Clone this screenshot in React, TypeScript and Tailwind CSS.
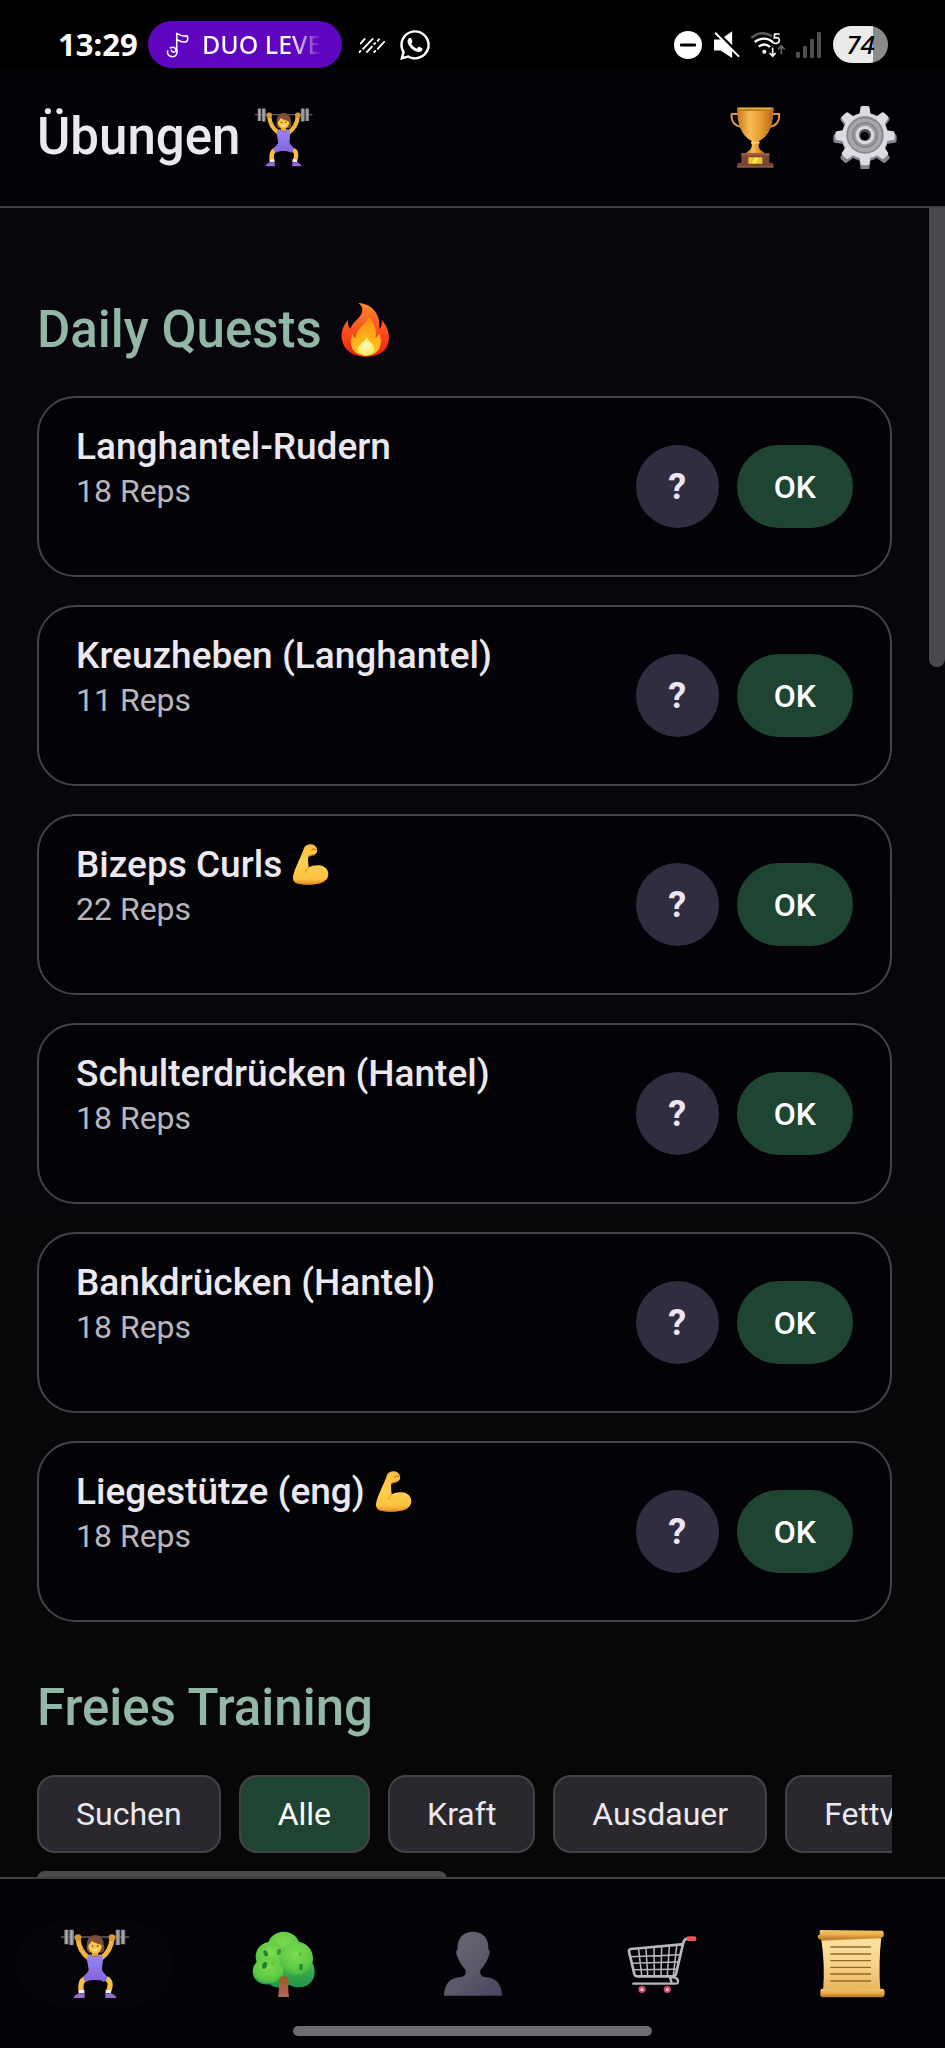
import { useState } from 'react';
import type { ReactNode } from 'react';
import { FaWhatsapp } from 'react-icons/fa';

type IconProps = { className?: string };

function LifterIcon({ className }: IconProps) {
  return (
    <svg viewBox="60 52 210 216" className={className} aria-hidden="true">
      <defs>
        <linearGradient id="plate" x1="0" x2="1" y1="0" y2="0">
          <stop offset="0" stopColor="#77777b" />
          <stop offset="0.5" stopColor="#b0b0b4" />
          <stop offset="1" stopColor="#5c5c60" />
        </linearGradient>
        <linearGradient id="suit" x1="0" x2="0" y1="0" y2="1">
          <stop offset="0" stopColor="#9a86f2" />
          <stop offset="1" stopColor="#8064de" />
        </linearGradient>
      </defs>
      <path d="M63 79H268" stroke="#8c8c90" strokeWidth="3" />
      <rect x="73" y="57" width="13" height="44" rx="2" fill="url(#plate)" />
      <rect x="88" y="57" width="14" height="46" rx="2" fill="url(#plate)" />
      <rect x="227" y="57" width="14" height="46" rx="2" fill="url(#plate)" />
      <rect x="243" y="57" width="13" height="44" rx="2" fill="url(#plate)" />
      <path d="M114 84C116 108 126 128 147 143M216 84C214 108 204 128 183 143" fill="none" stroke="#f3b53c" strokeWidth="15" strokeLinecap="round" />
      <circle cx="114" cy="81" r="10" fill="#d99a2b" />
      <circle cx="216" cy="81" r="10" fill="#d99a2b" />
      <path d="M141 100c0-36 50-36 50 0 4 12 2 24-5 26h-39c-8-4-8-16-6-26z" fill="#7e4c33" />
      <path d="M155 120h20v18h-20z" fill="#e3a12f" />
      <ellipse cx="165" cy="108" rx="20" ry="20" fill="#fbc645" />
      <path d="M145 104c4-3 8-9 10-14 7 7 20 9 31 14-1-15-8-24-20-24s-20 9-21 24z" fill="#80503a" />
      <circle cx="158" cy="106" r="2.5" fill="#4c2b20" />
      <circle cx="173" cy="106" r="2.5" fill="#4c2b20" />
      <path d="M158 116q8 6 15 0" fill="none" stroke="#fff" strokeWidth="3" />
      <path d="M135 204c-12 6-15 17-11 40M199 204c13 6 15 17 6 40" fill="none" stroke="#f8bd43" strokeWidth="16" />
      <path d="M142 137l9-7c5 12 23 12 28 0l9 7c2 14-2 32-2 42 4 8 12 14 16 20-2 7-6 11-11 15-9-8-43-8-52 0-5-4-9-8-10-15 6-7 14-12 17-20 0-12-7-28-4-42z" fill="url(#suit)" />
      <path d="M116 238h17v10h-17zM197 238h16v10h-16z" fill="#f4effa" />
      <path d="M101 262c0-9 11-10 16-16 7 5 11 3 17 1v15zM229 262c0-9-11-10-16-16-7 5-11 3-17 1v15z" fill="#956bd0" />
    </svg>
  );
}

function TrophyIcon({ className }: IconProps) {
  return (
    <svg viewBox="64 46 192 192" className={className} aria-hidden="true">
      <defs>
        <linearGradient id="cup" x1="0" x2="1" y1="0" y2="0">
          <stop offset="0" stopColor="#c77b1d" />
          <stop offset="0.35" stopColor="#f8bd55" />
          <stop offset="0.65" stopColor="#e79a31" />
          <stop offset="1" stopColor="#b4681a" />
        </linearGradient>
      </defs>
      <path d="M110 73H90c-3 22 9 36 29 38M212 73h20c3 22-9 36-29 38" fill="none" stroke="#dc9547" strokeWidth="6" />
      <path d="M107 56h108c1 45-11 83-43 98h-22c-32-15-44-53-43-98z" fill="url(#cup)" />
      <rect x="106" y="53" width="110" height="11" rx="4" fill="#b97c18" />
      <path d="M112 57h96" stroke="#f0bd4f" strokeWidth="3" />
      <path d="M150 153h22v8c-3 13 2 21 15 27v6h-53v-6c14-6 18-15 16-27z" fill="url(#cup)" />
      <path d="M148 159h26" stroke="#ffd47b" strokeWidth="5" />
      <path d="M119 191h84v31h-84z" fill="#81472f" />
      <path d="M119 191h84v6h-84z" fill="#9c6046" />
      <path d="M106 233v-8c0-4 4-6 8-6h94c5 0 8 2 8 6v8z" fill="#764334" />
      <path d="M107 232h108" stroke="#a66b56" strokeWidth="3" />
      <rect x="140" y="203" width="42" height="19" rx="2" fill="#ebc52b" />
      <path d="M151 221l8-17h12l-8 17z" fill="#ffe956" />
    </svg>
  );
}

const teeth = [0, 45, 90, 135, 180, 225, 270, 315];

function GearIcon({ className }: IconProps) {
  return (
    <svg viewBox="398 48 192 192" className={className} aria-hidden="true">
      <defs>
        <linearGradient id="gearFace" x1="0" x2="0" y1="0" y2="1">
          <stop offset="0" stopColor="#d9d9de" />
          <stop offset="1" stopColor="#dedde5" />
        </linearGradient>
      </defs>
      <g fill="#85858f">
        <circle cx="494" cy="148" r="69" />
        {teeth.map((a) => (
          <path key={a} d="M477 84l4-26q1-5 6-5h14q5 0 6 5l4 26z" transform={`rotate(${a} 494 148)`} />
        ))}
      </g>
      <g fill="url(#gearFace)">
        <circle cx="494" cy="140" r="69" />
        {teeth.map((a) => (
          <path key={a} d="M477 78l4-23q1-4 6-4h14q5 0 6 4l4 23z" transform={`rotate(${a} 494 140)`} />
        ))}
      </g>
      <circle cx="494" cy="138" r="56" fill="#85868b" />
      <circle cx="494" cy="139" r="51" fill="#a6a7ad" />
      <circle cx="494" cy="138" r="39" fill="#85868b" />
      <circle cx="494" cy="138" r="34" fill="#9b9ba1" />
      <circle cx="494" cy="138" r="28" fill="#d8d8de" />
      <circle cx="494" cy="138" r="18" fill="#4d4d52" />
      <circle cx="493" cy="141" r="13" fill="#050409" />
    </svg>
  );
}

function FireIcon({ className }: IconProps) {
  return (
    <svg viewBox="1008 66 150 168" className={className} aria-hidden="true">
      <defs>
        <linearGradient id="flame" x1="0" x2="0" y1="0" y2="1">
          <stop offset="0" stopColor="#ff8a2c" />
          <stop offset="0.45" stopColor="#fb5520" />
          <stop offset="1" stopColor="#f2200c" />
        </linearGradient>
        <linearGradient id="flameCore" x1="0" x2="0" y1="0" y2="1">
          <stop offset="0" stopColor="#fd8d14" />
          <stop offset="0.5" stopColor="#ffae18" />
          <stop offset="1" stopColor="#ffc42a" />
        </linearGradient>
        <radialGradient id="flameHeart">
          <stop offset="0" stopColor="#fffbc4" />
          <stop offset="1" stopColor="#ffe95c" />
        </radialGradient>
      </defs>
      <path d="M1063 69c42 2 68 36 63 78 7-5 8-14 7-27 20 22 25 46 20 68-7 27-32 42-68 42-37 0-65-18-71-50-4-22 3-43 18-59-1 12 1 21 7 25 5-12 10-18 22-29 17-17 20-35 2-48z" fill="url(#flame)" />
      <path d="M1094 110c-4 24-36 30-39 64-6-2-9-7-9-13-16 36 4 66 40 66 38 0 54-33 39-67-2 7-6 12-11 14 6-24-4-46-20-64z" fill="url(#flameCore)" />
      <path d="M1088 170c3 14 23 19 23 38 0 12-11 19-25 19s-25-7-25-19c0-17 22-21 27-38z" fill="url(#flameHeart)" />
    </svg>
  );
}

function BicepsIcon({ className }: IconProps) {
  return (
    <svg viewBox="66 12 114 129" className={className} aria-hidden="true">
      <defs>
        <linearGradient id="arm" x1="0" x2="0" y1="0" y2="1">
          <stop offset="0" stopColor="#fbbf42" />
          <stop offset="0.5" stopColor="#ffce50" />
          <stop offset="0.85" stopColor="#fdc23f" />
          <stop offset="1" stopColor="#e79127" />
        </linearGradient>
      </defs>
      <path d="M102 27c4-7 11-11 19-11 10 0 18 6 20 14 2 8-1 14-9 17-7 2-12 1-16 5-4 7-1 19 0 33 9-4 19-7 30-6 18 1 29 12 29 27 0 22-26 31-56 31-32 0-50-3-50-21 1-22 22-56 33-89z" fill="url(#arm)" />
      <path d="M116 85c-5 4-8 9-9 15" fill="none" stroke="#dc9026" strokeWidth="3" strokeLinecap="round" />
      <path d="M126 35c-1-5 5-6 12-3M116 52c5-4 10-3 16-5" fill="none" stroke="#cf8424" strokeWidth="4" strokeLinecap="round" />
      <path d="M77 130c17 6 62 6 83-2" fill="none" stroke="#df8a24" strokeWidth="4" strokeLinecap="round" opacity="0.7" />
    </svg>
  );
}

function TreeIcon({ className }: IconProps) {
  return (
    <svg viewBox="630 52 210 216" className={className} aria-hidden="true">
      <defs>
        <radialGradient id="leafA" cx="0.5" cy="0.35" r="0.65">
          <stop offset="0" stopColor="#7bdb50" />
          <stop offset="0.7" stopColor="#5fcb45" />
          <stop offset="1" stopColor="#45b443" />
        </radialGradient>
        <linearGradient id="leafB" x1="0" x2="0" y1="0" y2="1">
          <stop offset="0" stopColor="#4fbe44" />
          <stop offset="1" stopColor="#1f934f" />
        </linearGradient>
        <linearGradient id="trunk" x1="0" x2="0" y1="0" y2="1">
          <stop offset="0" stopColor="#9d5a22" />
          <stop offset="1" stopColor="#b2665b" />
        </linearGradient>
      </defs>
      <path d="M641 183c0-24 22-45 50-45h110c16 6 27 28 26 48-1 26-21 44-47 44-12 0-22-3-30-8-18 12-43 12-58-1-29 4-51-14-51-38z" fill="url(#leafB)" />
      <circle cx="734" cy="113" r="50" fill="url(#leafA)" />
      <circle cx="694" cy="138" r="44" fill="url(#leafA)" />
      <ellipse cx="688" cy="180" rx="46" ry="38" fill="url(#leafA)" />
      <circle cx="772" cy="143" r="50" fill="url(#leafA)" />
      <ellipse cx="680" cy="128" rx="6" ry="10" fill="#238330" transform="rotate(-25 680 128)" />
      <ellipse cx="720" cy="124" rx="6" ry="9" fill="#349832" transform="rotate(15 720 124)" />
      <ellipse cx="677" cy="164" rx="7" ry="11" fill="#217d31" transform="rotate(20 677 164)" />
      <ellipse cx="786" cy="169" rx="6" ry="10" fill="#279036" />
      <ellipse cx="784" cy="131" rx="5" ry="6" fill="#67b927" />
      <ellipse cx="701" cy="158" rx="5" ry="6" fill="#76ba25" />
      <ellipse cx="683" cy="199" rx="8" ry="5" fill="#70c631" />
      <circle cx="720" cy="92" r="4" fill="#99cf38" />
      <path d="M720 203c8-8 21-8 28 0 0 22-1 38 2 56h-33c4-17 3-36 3-56z" fill="url(#trunk)" />
    </svg>
  );
}

function ProfileIcon({ className }: IconProps) {
  return (
    <svg viewBox="56 52 210 216" className={className} aria-hidden="true">
      <defs>
        <linearGradient id="bust" x1="0" x2="1" y1="0" y2="1">
          <stop offset="0" stopColor="#6d6b79" />
          <stop offset="0.5" stopColor="#5c5a6a" />
          <stop offset="1" stopColor="#4a4360" />
        </linearGradient>
      </defs>
      <path d="M161 63c34 0 48 25 46 53 6 2 5 18-1 26-6 17-16 28-23 36-1 15 2 20 18 22 32 3 46 22 47 55H74c1-33 15-52 47-55 15-2 19-7 18-22-8-8-17-19-23-36-6-8-7-24-1-26-2-28 12-53 46-53z" fill="url(#bust)" />
    </svg>
  );
}

function CartIcon({ className }: IconProps) {
  return (
    <svg viewBox="624 52 210 216" className={className} aria-hidden="true">
      <g fill="none" stroke="#b9b8be" strokeLinecap="round" strokeLinejoin="round">
        <path d="M805 84q-9 1-12 12l-22 93q-2 8-10 8h-106q-7 0-9-7l-16-67q-1-7 6-8l152-14" strokeWidth="8" />
        <path d="M643 219h126q9 0 8-8 0-7-10-11h-14l5 17" strokeWidth="7" />
        <path d="M635 138l149-6M640 158l138-4M645 177l128-1M659 116l9 78M681 114l5 80M705 112l1 82M728 111l-2 83M751 109l-6 85M773 107l-10 87" strokeWidth="4.5" />
      </g>
      <rect x="803" y="77" width="29" height="14" rx="5" fill="#ed4f57" />
      <circle cx="669" cy="236" r="11" fill="#cc4567" />
      <circle cx="745" cy="236" r="11" fill="#cc4567" />
      <circle cx="669" cy="237" r="5" fill="#f5bccc" />
      <circle cx="745" cy="237" r="5" fill="#f5bccc" />
    </svg>
  );
}

function ScrollIcon({ className }: IconProps) {
  return (
    <svg viewBox="51 52 210 216" className={className} aria-hidden="true">
      <defs>
        <linearGradient id="paper" x1="0" x2="0" y1="0" y2="1">
          <stop offset="0" stopColor="#fbe3a2" />
          <stop offset="0.5" stopColor="#f6d48a" />
          <stop offset="1" stopColor="#e8b35c" />
        </linearGradient>
        <linearGradient id="roll" x1="0" x2="0" y1="0" y2="1">
          <stop offset="0" stopColor="#f5c765" />
          <stop offset="0.5" stopColor="#e9ad4c" />
          <stop offset="1" stopColor="#b87422" />
        </linearGradient>
      </defs>
      <path d="M66 80h181q-9 76-3 162H72q7-78-6-162z" fill="url(#paper)" />
      <path d="M67 90l180-7v-5H67z" fill="#c98f3b" />
      <path d="M62 62q0-4 5-4l182 2q5 0 5 5v11q0 4-5 4L67 87q-11 0-11-12l6-3z" fill="url(#roll)" />
      <path d="M64 240q0-6 6-6l60 4 119-4q8 0 8 12 0 14-8 14H71q-7 0-7-7z" fill="url(#roll)" />
      <path d="M94 109h122M94 130h122M94 150h122M94 170h122M94 190h122M94 211h122" stroke="#94692b" strokeWidth="4" />
    </svg>
  );
}

function NoteIcon() {
  return (
    <svg viewBox="498 90 76 86" className="h-7 w-6" fill="none" stroke="#fff" strokeWidth="5" strokeLinejoin="round" strokeLinecap="round" aria-hidden="true">
      <path d="M532 152V96q20 12 33 8 5 12-3 19-13 3-29-7M532 145c4 14-2 25-13 25-12 0-18-8-16-18M512 142c8-5 18 0 17 8-2 8-13 7-14 0" />
    </svg>
  );
}

function StripesIcon() {
  return (
    <svg viewBox="1074 108 88 54" className="h-[18px] w-7" fill="none" stroke="#fff" strokeWidth="6" strokeLinecap="round" aria-hidden="true">
      <path d="M1083 130l12-14M1079 157l3-3M1090 147l30-31M1102 157l16-17M1125 132l3-3M1136 122l4-5M1125 157l3-3M1136 147l20-22" />
    </svg>
  );
}

function DoNotDisturbIcon() {
  return (
    <svg viewBox="0 0 28 28" className="size-7" aria-hidden="true">
      <circle cx="14" cy="14" r="14" fill="#fff" />
      <rect x="6" y="12.5" width="16" height="3" rx="1" fill="#000" />
    </svg>
  );
}

function MutedIcon() {
  return (
    <svg viewBox="216 92 82 82" className="size-7" aria-hidden="true">
      <path d="M222 117h19l34-24v78l-34-22h-19z" fill="#fff" />
      <path d="M222 86l84 84" stroke="#000" strokeWidth="8" />
      <path d="M225 97l70 70" stroke="#fff" strokeWidth="6" />
    </svg>
  );
}

function WifiIcon() {
  return (
    <svg viewBox="336 94 108 84" className="h-7 w-9" fill="none" aria-hidden="true">
      <path d="M340 115c20-17 43-17 62-5" stroke="#5b5b5b" strokeWidth="7" />
      <path d="M350 127c18-14 40-14 56 2M362 141c12-9 24-8 34 1" stroke="#fff" strokeWidth="7" />
      <circle cx="379" cy="156" r="6" fill="#fff" />
      <path d="M425 103h-15l-1 12c10-3 16 1 15 8-1 9-11 10-18 6" stroke="#fff" strokeWidth="5" />
      <path d="M404 144v25M395 160l9 10 9-10" stroke="#fff" strokeWidth="5" />
      <path d="M430 164v-24M420 149l10-10 10 10" stroke="#686868" strokeWidth="5" />
    </svg>
  );
}

function SignalIcon() {
  return (
    <svg viewBox="0 0 25 26" className="h-[26px] w-[25px]" fill="#4f4f4f" aria-hidden="true">
      <rect x="0" y="20" width="4" height="6" rx="1" />
      <rect x="7" y="14" width="4" height="12" rx="1" />
      <rect x="14" y="7" width="4" height="19" rx="1" />
      <rect x="21" y="0" width="4" height="26" rx="1" />
    </svg>
  );
}

function StatusBar() {
  return (
    <div className="flex shrink-0 items-center justify-between bg-black pt-[21px] pr-[57px] pl-[58px] font-['Noto_Sans',sans-serif] text-white">
      <div className="flex items-center">
        <span className="w-20 text-[31px] font-bold">13:29</span>
        <div className="ml-[10px] flex h-[47px] w-[194px] items-center gap-3 rounded-full bg-[#5f05c0] pl-[18px]">
          <NoteIcon />
          <span className="bg-linear-to-r from-white from-75% to-transparent bg-clip-text text-[25px] font-medium whitespace-nowrap text-transparent">
            DUO LEVE
          </span>
        </div>
        <div className="ml-4 flex items-center gap-3">
          <StripesIcon />
          <FaWhatsapp className="size-[34px]" />
        </div>
      </div>
      <div className="flex items-center gap-3">
        <div className="flex items-center gap-[10px]">
          <DoNotDisturbIcon />
          <MutedIcon />
          <WifiIcon />
          <SignalIcon />
        </div>
        <span className="flex h-[37px] w-[55px] items-center justify-center rounded-full bg-linear-to-r from-[#ebebeb] from-72% to-[#8b8b8b] to-72% text-[26px] font-medium text-black italic">
          74
        </span>
      </div>
    </div>
  );
}

type Quest = { name: string; reps: number; strong?: boolean };

const quests: Quest[] = [
  { name: 'Langhantel-Rudern', reps: 18 },
  { name: 'Kreuzheben (Langhantel)', reps: 11 },
  { name: 'Bizeps Curls', reps: 22, strong: true },
  { name: 'Schulterdrücken (Hantel)', reps: 18 },
  { name: 'Bankdrücken (Hantel)', reps: 18 },
  { name: 'Liegestütze (eng)', reps: 18, strong: true },
];

function QuestCard({ quest }: { quest: Quest }) {
  return (
    <li className="flex items-center gap-[18px] rounded-[38px] border-2 border-[#434247] bg-[#030207] px-[37px] py-[26px]">
      <div className="min-w-0 flex-1 pb-[35px]">
        <h3 className="flex items-center gap-[10px] text-[37px] leading-[45px] font-medium whitespace-nowrap text-[#ece8f0]">
          {quest.name}
          {quest.strong && <BicepsIcon className="h-[43px] w-[38px]" />}
        </h3>
        <p className="text-[32px] leading-[45px] text-[#b9b6bc]">{quest.reps} Reps</p>
      </div>
      <button
        type="button"
        aria-label={`Hilfe zu ${quest.name}`}
        className="size-[83px] rounded-full bg-[#322c40] text-4xl font-bold text-[#ece6f4]"
      >
        ?
      </button>
      <button type="button" className="h-[83px] rounded-full bg-[#1f4532] px-[37px] text-[32px] font-medium text-white">
        OK
      </button>
    </li>
  );
}

const filters = ['Suchen', 'Alle', 'Kraft', 'Ausdauer', 'Fettverbrennung'];

const tabs: { label: string; icon: ReactNode }[] = [
  { label: 'Übungen', icon: <LifterIcon className="h-[72px] w-[70px]" /> },
  { label: 'Natur', icon: <TreeIcon className="h-[72px] w-[70px]" /> },
  { label: 'Profil', icon: <ProfileIcon className="h-[72px] w-[70px]" /> },
  { label: 'Shop', icon: <CartIcon className="h-[72px] w-[70px]" /> },
  { label: 'Verlauf', icon: <ScrollIcon className="h-[72px] w-[70px]" /> },
];

export default function App() {
  const [filter, setFilter] = useState('Alle');
  const [tab, setTab] = useState('Übungen');

  return (
    <div className="flex h-screen flex-col bg-[#030207] font-[Roboto,sans-serif]">
      <StatusBar />
      <header className="flex shrink-0 items-center justify-between border-b-2 border-[#403f44] py-[37px] pr-12 pl-[37px]">
        <h1 className="flex items-center gap-[14px] text-[51px] leading-[64px] font-medium text-[#ece8f0]">
          Übungen
          <LifterIcon className="h-[61px] w-[59px]" />
        </h1>
        <div className="flex items-center gap-[46px]">
          <button type="button" aria-label="Erfolge">
            <TrophyIcon className="size-16" />
          </button>
          <button type="button" aria-label="Einstellungen">
            <GearIcon className="size-16" />
          </button>
        </div>
      </header>

      <div className="flex min-h-0 flex-1 bg-linear-to-b from-[#08050d] to-[#070707]">
        <main className="min-w-0 flex-1 overflow-y-auto px-[37px] pt-[92px] [scrollbar-width:none]">
          <section>
            <h2 className="flex items-center gap-[18px] text-[51px] leading-[60px] font-medium text-[#93b7a7]">
              Daily Quests
              <FireIcon className="h-[56px] w-[50px]" />
            </h2>
            <ul className="mt-9 flex flex-col gap-7">
              {quests.map((quest) => (
                <QuestCard key={quest.name} quest={quest} />
              ))}
            </ul>
          </section>
          <section className="mt-14">
            <h2 className="text-[51px] leading-[60px] font-medium text-[#93b7a7]">Freies Training</h2>
            <div className="mt-[37px] flex gap-[18px] overflow-x-auto [scrollbar-width:none]">
              {filters.map((name) => (
                <button
                  key={name}
                  type="button"
                  aria-pressed={filter === name}
                  onClick={() => setFilter(name)}
                  className={`h-[78px] shrink-0 rounded-[18px] border-2 border-[#434247] px-[37px] text-[32px] ${
                    filter === name ? 'bg-[#1f4532] text-white' : 'bg-[#2a282e] text-[#ece8f0]'
                  }`}
                >
                  {name}
                </button>
              ))}
            </div>
            <div className="mt-[18px] h-4 w-[48%] rounded-full bg-[#4a4a4a]" />
          </section>
        </main>
        <div className="w-4 shrink-0">
          <div className="h-[27.5%] rounded-b-full bg-[#4a484c]" />
        </div>
      </div>

      <nav className="shrink-0 border-t-2 border-[#403f44] pt-[43px]">
        <div className="grid grid-cols-5">
          {tabs.map(({ label, icon }) => (
            <button
              key={label}
              type="button"
              aria-label={label}
              onClick={() => setTab(label)}
              className={`mx-4 flex h-[84px] items-center justify-center rounded-full ${tab === label ? 'bg-[#050409]' : ''}`}
            >
              {icon}
            </button>
          ))}
        </div>
        <div className="mx-auto mt-5 mb-3 h-[10px] w-[38%] rounded-full bg-[#6d6c70]" />
      </nav>
    </div>
  );
}
